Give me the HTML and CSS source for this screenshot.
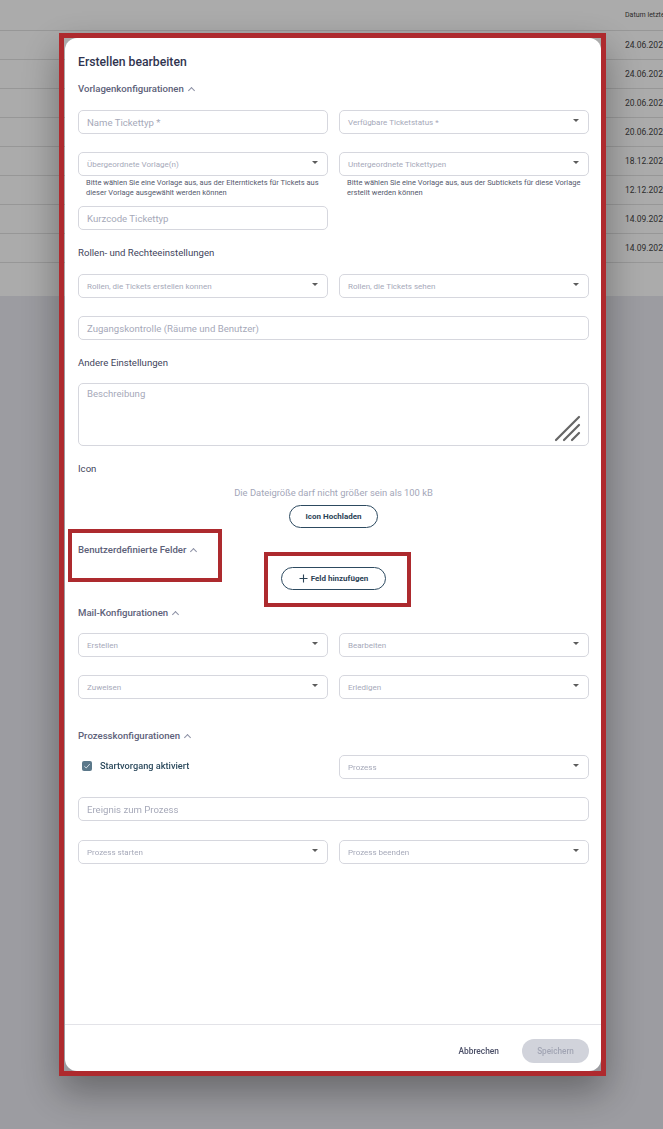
FILE: index.html
```html
<!DOCTYPE html>
<html lang="de">
<head>
    <meta charset="UTF-8">
    <meta name="viewport" content="width=device-width, initial-scale=1.0">
    <title>Erstellen bearbeiten</title>
    <link rel="stylesheet" href="styles.css">
</head>
<body>
    <div class="page">
        <div class="bg-head"><span class="bg-cell">Datum letzte Änderung</span></div>
        <div class="bg-row"><span class="bg-cell">24.06.2024</span></div>
        <div class="bg-row"><span class="bg-cell">24.06.2024</span></div>
        <div class="bg-row"><span class="bg-cell">20.06.2024</span></div>
        <div class="bg-row"><span class="bg-cell">20.06.2024</span></div>
        <div class="bg-row"><span class="bg-cell">18.12.2023</span></div>
        <div class="bg-row"><span class="bg-cell">12.12.2023</span></div>
        <div class="bg-row"><span class="bg-cell">14.09.2023</span></div>
        <div class="bg-row"><span class="bg-cell">14.09.2023</span></div>
    </div>

    <div class="overlay">
        <div class="frame">
            <div class="dialog">
                <div class="dialog-body">
                    <h1 class="title">Erstellen bearbeiten</h1>

                    <div class="section-head first">Vorlagenkonfigurationen <span class="chev"></span></div>
                    <div class="row after-head">
                        <div class="field">Name Tickettyp *</div>
                        <div class="field select">Verfügbare Ticketstatus * <span class="arrow"></span></div>
                    </div>
                    <div class="row after-field">
                        <div>
                            <div class="field select">Übergeordnete Vorlage(n) <span class="arrow"></span></div>
                            <p class="hint">Bitte wählen Sie eine Vorlage aus, aus der Elterntickets für Tickets aus dieser Vorlage ausgewählt werden können</p>
                        </div>
                        <div>
                            <div class="field select">Untergeordnete Tickettypen <span class="arrow"></span></div>
                            <p class="hint">Bitte wählen Sie eine Vorlage aus, aus der Subtickets für diese Vorlage erstellt werden können</p>
                        </div>
                    </div>
                    <div class="row after-hint">
                        <div class="field">Kurzcode Tickettyp</div>
                    </div>

                    <div class="label after-field">Rollen- und Rechteeinstellungen</div>
                    <div class="row after-head">
                        <div class="field select">Rollen, die Tickets erstellen konnen <span class="arrow"></span></div>
                        <div class="field select">Rollen, die Tickets sehen <span class="arrow"></span></div>
                    </div>
                    <div class="field after-field">Zugangskontrolle (Räume und Benutzer)</div>

                    <div class="label after-field">Andere Einstellungen</div>
                    <div class="field textarea text-gap">
                        Beschreibung
                        <svg class="resize" width="28" height="28" viewBox="0 0 28 28">
                            <path d="M3 26 L26 3 M11 26 L26 11 M19 26 L26 19" stroke="#666" stroke-width="2.2" stroke-linecap="round" fill="none"/>
                        </svg>
                    </div>

                    <div class="label after-field">Icon</div>
                    <p class="upload-note">Die Dateigröße darf nicht größer sein als 100 kB</p>
                    <div class="center">
                        <button type="button" class="btn-outline upload">Icon Hochladen</button>
                    </div>

                    <div class="section-head custom">Benutzerdefinierte Felder <span class="chev"></span></div>
                    <div class="center add-wrap">
                        <button type="button" class="btn-outline add">
                            <svg width="9" height="9" viewBox="0 0 9 9"><path d="M4.5 0.5 V8.5 M0.5 4.5 H8.5" stroke="#2b4457" stroke-width="1.1" fill="none"/></svg>
                            Feld hinzufügen
                        </button>
                    </div>

                    <div class="section-head mail">Mail-Konfigurationen <span class="chev"></span></div>
                    <div class="row mail-gap">
                        <div class="field select">Erstellen <span class="arrow"></span></div>
                        <div class="field select">Bearbeiten <span class="arrow"></span></div>
                    </div>
                    <div class="row after-field">
                        <div class="field select">Zuweisen <span class="arrow"></span></div>
                        <div class="field select">Erledigen <span class="arrow"></span></div>
                    </div>

                    <div class="section-head process">Prozesskonfigurationen <span class="chev"></span></div>
                    <div class="row process-gap">
                        <label class="check">
                            <span class="box">
                                <svg width="8" height="8" viewBox="0 0 8 8"><path d="M1.3 4.2 L3.2 6 L6.8 2" stroke="#dfe7ec" stroke-width="0.9" fill="none"/></svg>
                            </span>
                            Startvorgang aktiviert
                        </label>
                        <div class="field select">Prozess <span class="arrow"></span></div>
                    </div>
                    <div class="field event-gap">Ereignis zum Prozess</div>
                    <div class="row last-gap">
                        <div class="field select">Prozess starten <span class="arrow"></span></div>
                        <div class="field select">Prozess beenden <span class="arrow"></span></div>
                    </div>
                </div>

                <div class="dialog-footer">
                    <button type="button" class="btn-text">Abbrechen</button>
                    <button type="button" class="btn-save">Speichern</button>
                </div>

                <div class="mark mark-head"></div>
                <div class="mark mark-button"></div>
            </div>
        </div>
    </div>
</body>
</html>
```

FILE: styles.css
```css
body {
    font-family: Roboto, "Noto Sans", Arial, sans-serif;
    background-color: #e9e9f0;
    margin: 0;
    padding: 0;
    overflow: hidden;
    height: 1129px;
}
.page {
    background: #fff;
    height: 296px;
    color: #444;
}
.bg-head, .bg-row {
    display: flex;
    justify-content: flex-end;
    align-items: center;
    border-bottom: 1px solid #e2e2e2;
    box-sizing: border-box;
}
.bg-head {
    height: 31px;
    font-size: 7px;
}
.bg-row {
    height: 29px;
    font-size: 8.5px;
}
.bg-cell {
    width: 38px;
    overflow: hidden;
    white-space: nowrap;
}
.overlay {
    position: fixed;
    top: 0;
    left: 0;
    right: 0;
    bottom: 0;
    background: rgba(0, 0, 0, 0.33);
    display: flex;
    justify-content: center;
    align-items: flex-start;
    padding-top: 33px;
}
.frame {
    border: 5px solid #ae2a2e;
    padding: 0 0 0 1px;
    margin-left: 2px;
    box-shadow: 0 16px 36px rgba(0, 0, 0, 0.35);
}
.dialog {
    position: relative;
    width: 536px;
    height: 1033px;
    background: #fff;
    border-radius: 12px;
    display: flex;
    flex-direction: column;
}
.dialog-body {
    flex: 1;
    padding: 14px 12px 0 13px;
}
.title {
    margin: 0;
    font-size: 12.2px;
    font-weight: 500;
    line-height: 20px;
    color: #30344f;
}
.section-head, .label {
    font-size: 9.6px;
    line-height: 14px;
    display: flex;
    align-items: center;
}
.section-head {
    color: #5d6179;
    font-weight: 500;
}
.label {
    color: #42455c;
}
.chev {
    width: 4px;
    height: 4px;
    border-left: 1px solid #8d91a5;
    border-top: 1px solid #8d91a5;
    transform: rotate(45deg);
    margin: 3px 0 0 5px;
}
.first { margin-top: 10px; }
.custom { margin-top: 15px; }
.mail { margin-top: 16px; }
.process { margin-top: 30px; }
.after-head { margin-top: 14px; }
.text-gap { margin-top: 13px; }
.mail-gap { margin-top: 13px; }
.process-gap { margin-top: 12px; }
.event-gap { margin-top: 18px; }
.last-gap { margin-top: 19px; }
.after-field { margin-top: 18px; }
.after-hint { margin-top: 8px; }
.label.after-field { margin-top: 16px; }
.row {
    display: grid;
    grid-template-columns: 1fr 1fr;
    column-gap: 11px;
}
.field {
    height: 24px;
    box-sizing: border-box;
    border: 1px solid #d6d7de;
    border-radius: 5px;
    padding: 0 8px;
    display: flex;
    align-items: center;
    font-size: 9.6px;
    color: #a6a9b9;
    white-space: nowrap;
}
.select {
    font-size: 8px;
    justify-content: space-between;
    padding-right: 9px;
}
.arrow {
    width: 0;
    height: 0;
    border-left: 3.5px solid transparent;
    border-right: 3.5px solid transparent;
    border-top: 3.5px solid #5c5c5c;
    margin-bottom: 4px;
}
.hint {
    margin: 2px 0 0 8px;
    font-size: 7.5px;
    line-height: 10px;
    color: #55596d;
}
.textarea {
    position: relative;
    height: 63px;
    align-items: flex-start;
    padding-top: 4px;
}
.resize {
    position: absolute;
    right: 7px;
    bottom: 3px;
}
.upload-note {
    margin: 10px 0 0;
    text-align: center;
    font-size: 9.4px;
    line-height: 14px;
    color: #a3a6b8;
}
.center {
    display: flex;
    justify-content: center;
}
.btn-outline {
    font-family: inherit;
    background: #fff;
    border: 1px solid #2d4a60;
    border-radius: 12px;
    height: 23px;
    font-size: 8px;
    font-weight: 700;
    color: #2b4255;
    cursor: pointer;
    display: flex;
    align-items: center;
    justify-content: center;
}
.upload {
    margin-top: 5px;
    width: 89px;
}
.add-wrap { margin-top: 10px; }
.add {
    width: 105px;
    gap: 3px;
}
.check {
    display: flex;
    align-items: center;
    padding-left: 4px;
    margin-top: -3px;
    font-size: 9.2px;
    font-weight: 500;
    color: #2c4a5d;
}
.box {
    width: 10px;
    height: 10px;
    border-radius: 2px;
    background: #5b788a;
    display: flex;
    align-items: center;
    justify-content: center;
    margin-right: 8px;
}
.dialog-footer {
    box-sizing: border-box;
    height: 47px;
    border-top: 1px solid #e3e3e8;
    display: flex;
    justify-content: flex-end;
    align-items: center;
    padding: 6px 12px 0 0;
    gap: 13px;
}
.btn-text {
    font-family: inherit;
    background: none;
    border: none;
    font-size: 8.4px;
    font-weight: 500;
    color: #4c5068;
    padding: 0 10px;
    height: 24px;
    cursor: pointer;
}
.btn-save {
    font-family: inherit;
    background: #d1d3db;
    border: none;
    border-radius: 12px;
    width: 67px;
    height: 24px;
    font-size: 8.2px;
    font-weight: 500;
    color: #a2a5b4;
}
.mark {
    position: absolute;
    border: 4px solid #ad2a2e;
    box-sizing: border-box;
}
.mark-head {
    left: 3px;
    top: 491px;
    width: 154px;
    height: 53px;
}
.mark-button {
    left: 199px;
    top: 514px;
    width: 147px;
    height: 55px;
}
```
